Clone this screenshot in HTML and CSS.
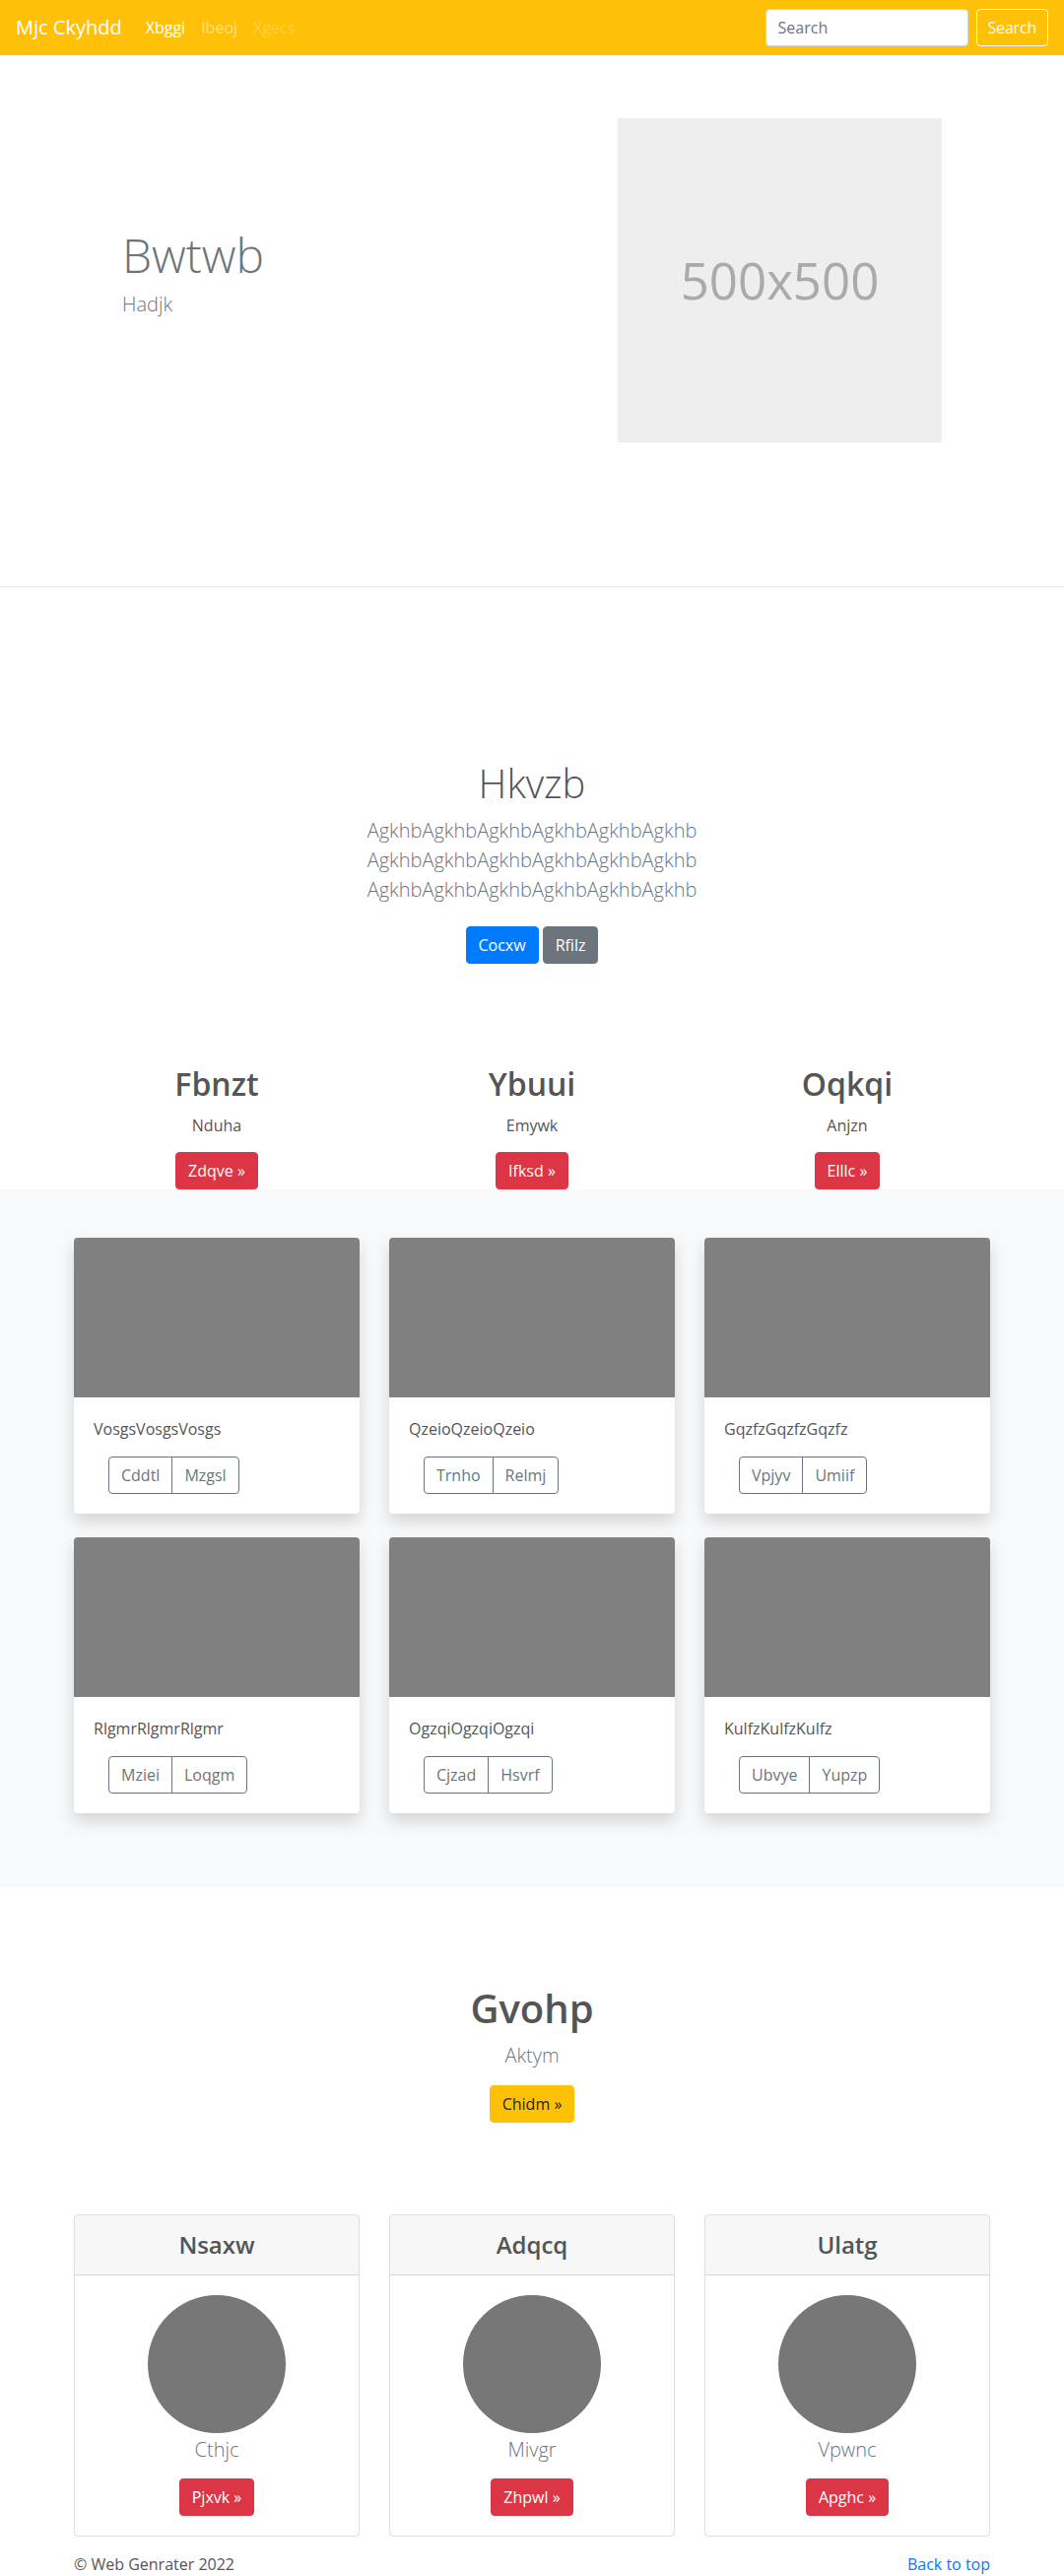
FILE: index.html
```html
<!DOCTYPE html>
<html lang="en">
<head>
<meta charset="utf-8">
<title>Mjc Ckyhdd</title>
<link rel="stylesheet" href="styles.css">
</head>
<body>
<nav class="navbar">
  <a class="brand" href="#">Mjc Ckyhdd</a>
  <div class="nav">
    <a class="nav-link active" href="#">Xbggi</a>
    <a class="nav-link" href="#">Ibeoj</a>
    <a class="nav-link disabled" href="#">Xgecs</a>
  </div>
  <form class="search">
    <input class="search-input" type="text" placeholder="Search">
    <button class="search-btn" type="button">Search</button>
  </form>
</nav>

<header class="hero">
  <div class="hero-inner">
    <div class="hero-text">
      <h1 class="hero-title">Bwtwb</h1>
      <p class="hero-sub">Hadjk</p>
    </div>
    <div class="hero-media">
      <div class="placeholder">500x500</div>
    </div>
  </div>
</header>

<section class="intro">
  <h1 class="intro-title">Hkvzb</h1>
  <p class="intro-text">AgkhbAgkhbAgkhbAgkhbAgkhbAgkhb<br>AgkhbAgkhbAgkhbAgkhbAgkhbAgkhb<br>AgkhbAgkhbAgkhbAgkhbAgkhbAgkhb</p>
  <div class="intro-actions">
    <a class="btn btn-primary" href="#">Cocxw</a>
    <a class="btn btn-secondary" href="#">Rfilz</a>
  </div>
</section>

<section class="features">
  <div class="feature">
    <h2 class="feature-title">Fbnzt</h2>
    <p class="feature-text">Nduha</p>
    <a class="btn btn-danger" href="#">Zdqve &raquo;</a>
  </div>
  <div class="feature">
    <h2 class="feature-title">Ybuui</h2>
    <p class="feature-text">Emywk</p>
    <a class="btn btn-danger" href="#">Ifksd &raquo;</a>
  </div>
  <div class="feature">
    <h2 class="feature-title">Oqkqi</h2>
    <p class="feature-text">Anjzn</p>
    <a class="btn btn-danger" href="#">Elllc &raquo;</a>
  </div>
</section>

<section class="album">
  <div class="album-grid">
    <div class="card">
      <div class="card-img"></div>
      <div class="card-body">
        <p class="card-text">VosgsVosgsVosgs</p>
        <div class="btn-group"><a class="btn btn-outline" href="#">Cddtl</a><a class="btn btn-outline" href="#">Mzgsl</a></div>
      </div>
    </div>
    <div class="card">
      <div class="card-img"></div>
      <div class="card-body">
        <p class="card-text">QzeioQzeioQzeio</p>
        <div class="btn-group"><a class="btn btn-outline" href="#">Trnho</a><a class="btn btn-outline" href="#">Relmj</a></div>
      </div>
    </div>
    <div class="card">
      <div class="card-img"></div>
      <div class="card-body">
        <p class="card-text">GqzfzGqzfzGqzfz</p>
        <div class="btn-group"><a class="btn btn-outline" href="#">Vpjyv</a><a class="btn btn-outline" href="#">Umiif</a></div>
      </div>
    </div>
    <div class="card">
      <div class="card-img"></div>
      <div class="card-body">
        <p class="card-text">RlgmrRlgmrRlgmr</p>
        <div class="btn-group"><a class="btn btn-outline" href="#">Mziei</a><a class="btn btn-outline" href="#">Loqgm</a></div>
      </div>
    </div>
    <div class="card">
      <div class="card-img"></div>
      <div class="card-body">
        <p class="card-text">OgzqiOgzqiOgzqi</p>
        <div class="btn-group"><a class="btn btn-outline" href="#">Cjzad</a><a class="btn btn-outline" href="#">Hsvrf</a></div>
      </div>
    </div>
    <div class="card">
      <div class="card-img"></div>
      <div class="card-body">
        <p class="card-text">KulfzKulfzKulfz</p>
        <div class="btn-group"><a class="btn btn-outline" href="#">Ubvye</a><a class="btn btn-outline" href="#">Yupzp</a></div>
      </div>
    </div>
  </div>
</section>

<section class="cta">
  <h1 class="cta-title">Gvohp</h1>
  <p class="cta-text">Aktym</p>
  <a class="btn btn-warning" href="#">Chidm &raquo;</a>
</section>

<section class="pricing">
  <div class="price-card">
    <div class="price-header"><h4 class="price-title">Nsaxw</h4></div>
    <div class="price-body">
      <div class="avatar"></div>
      <p class="price-name">Cthjc</p>
      <a class="btn btn-danger" href="#">Pjxvk &raquo;</a>
    </div>
  </div>
  <div class="price-card">
    <div class="price-header"><h4 class="price-title">Adqcq</h4></div>
    <div class="price-body">
      <div class="avatar"></div>
      <p class="price-name">Mivgr</p>
      <a class="btn btn-danger" href="#">Zhpwl &raquo;</a>
    </div>
  </div>
  <div class="price-card">
    <div class="price-header"><h4 class="price-title">Ulatg</h4></div>
    <div class="price-body">
      <div class="avatar"></div>
      <p class="price-name">Vpwnc</p>
      <a class="btn btn-danger" href="#">Apghc &raquo;</a>
    </div>
  </div>
</section>

<footer class="footer">
  <p>&copy; Web Genrater 2022</p>
  <a class="back-top" href="#">Back to top</a>
</footer>
</body>
</html>
```

FILE: styles.css
```css
* { box-sizing: border-box; }

body {
  margin: 0;
  font-family: "Open Sans", "Noto Sans", sans-serif;
  font-size: 16px;
  line-height: 1.5;
  color: #555;
  background: #fff;
}

h1, h2, h4, p { margin: 0; }

/* Navbar */
.navbar {
  display: flex;
  align-items: center;
  height: 56px;
  padding: 0 16px;
  background: #ffc107;
}
.brand {
  font-size: 20px;
  line-height: 30px;
  color: #fff;
  margin-right: 16px;
  text-decoration: none;
}
.nav { display: flex; }
.nav-link {
  padding: 8px;
  line-height: 24px;
  color: rgba(255, 255, 255, 0.5);
  text-decoration: none;
}
.nav-link.active { color: #fff; }
.nav-link.disabled { color: rgba(255, 255, 255, 0.25); }
.search { margin: 0 0 0 auto; display: flex; }
.search-input {
  width: 206px;
  height: 38px;
  padding: 6px 12px;
  margin-right: 8px;
  border: 1px solid #ced4da;
  border-radius: 4px;
  font: inherit;
  color: #495057;
  background: #fff;
}
.search-input::placeholder { color: #6c757d; }
.search-btn {
  height: 38px;
  padding: 6px 11px;
  border: 1px solid #f8f9fa;
  border-radius: 4px;
  background: transparent;
  color: #f8f9fa;
  font: inherit;
  line-height: 24px;
  letter-spacing: -0.2px;
}

/* Hero */
.hero { border-bottom: 1px solid #e6e6e6; }
.hero-inner {
  width: 960px;
  margin: 0 auto;
  display: flex;
  align-items: flex-start;
  padding: 64px 0 146px;
}
.hero-text {
  width: 480px;
  padding: 110px 0 0 64px;
}
.hero-title {
  font-size: 48px;
  font-weight: 300;
  line-height: 1.2;
  color: #6c757d;
  margin-bottom: 6px;
}
.hero-sub {
  font-size: 20px;
  font-weight: 300;
  line-height: 30px;
  color: #6c757d;
}
.hero-media { padding-left: 87px; }
.placeholder {
  width: 329px;
  height: 329px;
  background: #eee;
  color: #aaa;
  display: flex;
  align-items: center;
  justify-content: center;
  font-size: 51px;
}

/* Buttons */
.btn {
  display: inline-block;
  padding: 6px 12px;
  font-size: 16px;
  line-height: 24px;
  border: 1px solid transparent;
  border-radius: 4px;
  text-decoration: none;
  color: #fff;
  white-space: nowrap;
}
.btn-primary { background: #007bff; border-color: #007bff; }
.btn-secondary { background: #6c757d; border-color: #6c757d; }
.btn-danger { background: #dc3545; border-color: #dc3545; }
.btn-warning { background: #ffc107; border-color: #ffc107; color: #212529; }
.btn-outline { background: transparent; border-color: #6c757d; color: #6c757d; }

/* Intro */
.intro {
  text-align: center;
  padding-top: 175px;
}
.intro-title {
  font-size: 40px;
  font-weight: 300;
  line-height: 48px;
  color: #555;
  margin-bottom: 9px;
}
.intro-text {
  font-size: 20px;
  font-weight: 300;
  line-height: 30px;
  color: #6c757d;
}
.intro-actions {
  margin-top: 22px;
  display: flex;
  justify-content: center;
  gap: 4px;
}

/* Features */
.features {
  width: 930px;
  margin: 0 auto;
  padding-top: 103px;
  display: grid;
  grid-template-columns: repeat(3, 1fr);
  column-gap: 30px;
  text-align: center;
}
.feature {
  display: flex;
  flex-direction: column;
  align-items: center;
}
.feature-title {
  font-size: 32px;
  font-weight: 600;
  line-height: 38px;
  margin-bottom: 11px;
}
.feature-text { margin-bottom: 15px; }

/* Album */
.album {
  background: #f8f9fa;
  padding: 49px 0 75px;
}
.album-grid {
  width: 930px;
  margin: 0 auto;
  display: grid;
  grid-template-columns: repeat(3, 1fr);
  gap: 24px 30px;
}
.card {
  background: #fff;
  border-radius: 4px;
  overflow: hidden;
  box-shadow: 0 8px 16px rgba(0, 0, 0, 0.15);
}
.card-img {
  height: 162px;
  background: #808080;
}
.card-body { padding: 20px; }
.card-text { margin-bottom: 16px; }
.btn-group {
  display: flex;
  width: max-content;
  margin-left: 15px;
}
.btn-group .btn:first-child { border-radius: 4px 0 0 4px; }
.btn-group .btn + .btn { margin-left: -1px; border-radius: 0 4px 4px 0; }

/* CTA */
.cta {
  padding-top: 99px;
  display: flex;
  flex-direction: column;
  align-items: center;
  text-align: center;
}
.cta-title {
  font-size: 40px;
  font-weight: 600;
  line-height: 48px;
  margin-bottom: 9px;
}
.cta-text {
  font-size: 20px;
  font-weight: 300;
  line-height: 30px;
  color: #6c757d;
  margin-bottom: 15px;
}

/* Pricing */
.pricing {
  width: 930px;
  margin: 93px auto 0;
  display: grid;
  grid-template-columns: repeat(3, 1fr);
  column-gap: 30px;
}
.price-card {
  border: 1px solid rgba(0, 0, 0, 0.125);
  border-radius: 4px;
  text-align: center;
  overflow: hidden;
}
.price-header {
  padding: 16px 20px;
  background: rgba(0, 0, 0, 0.03);
  border-bottom: 1px solid rgba(0, 0, 0, 0.125);
}
.price-title {
  font-size: 24px;
  font-weight: 600;
  line-height: 28px;
}
.price-body {
  padding: 20px;
  display: flex;
  flex-direction: column;
  align-items: center;
}
.avatar {
  width: 140px;
  height: 140px;
  border-radius: 50%;
  background: #777;
}
.price-name {
  font-size: 20px;
  font-weight: 300;
  line-height: 30px;
  color: #6c757d;
  margin: 2px 0 14px;
}

/* Footer */
.footer {
  width: 930px;
  margin: 17px auto 0;
  display: flex;
  justify-content: space-between;
  line-height: 23px;
}
.back-top {
  color: #007bff;
  text-decoration: none;
}
```
